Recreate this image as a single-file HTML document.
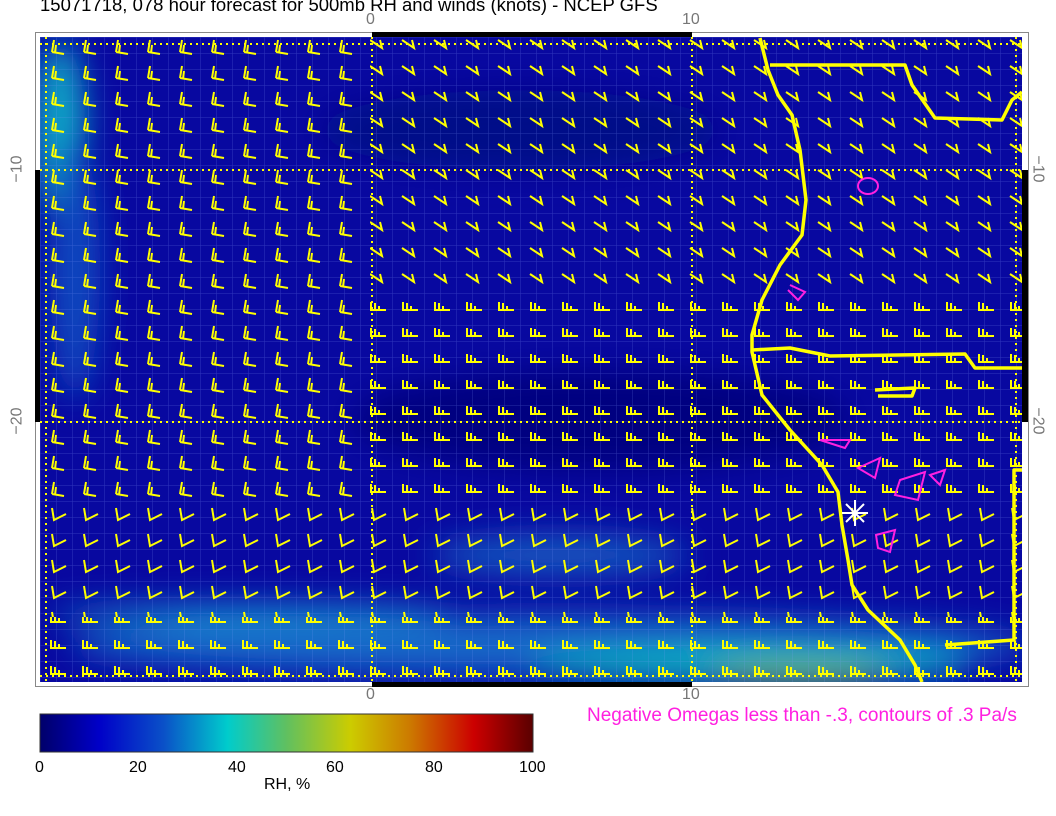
<!DOCTYPE html>
<html><head><meta charset="utf-8"><style>
html,body{margin:0;padding:0;background:#fff;}
body{width:1056px;height:816px;position:relative;overflow:hidden;font-family:"Liberation Sans",sans-serif;}
.t{position:absolute;white-space:nowrap;}
</style></head><body>
<div class="t" style="left:40px;top:-6px;font-size:18.5px;color:#000;">15071718, 078 hour forecast for 500mb RH and winds (knots) - NCEP GFS</div>
<div class="t" style="left:366px;top:11px;font-size:16px;color:#777;">0</div>
<div class="t" style="left:682px;top:11px;font-size:16px;color:#777;">10</div>
<div class="t" style="left:366px;top:686px;font-size:16px;color:#777;">0</div>
<div class="t" style="left:682px;top:686px;font-size:16px;color:#777;">10</div>
<div class="t" style="left:4px;top:160px;font-size:16px;color:#777;transform:rotate(-90deg);">−10</div>
<div class="t" style="left:4px;top:412px;font-size:16px;color:#777;transform:rotate(-90deg);">−20</div>
<div class="t" style="left:1024px;top:160px;font-size:16px;color:#777;transform:rotate(90deg);">−10</div>
<div class="t" style="left:1024px;top:412px;font-size:16px;color:#777;transform:rotate(90deg);">−20</div>
<svg width="1056" height="816" style="position:absolute;left:0;top:0" xmlns="http://www.w3.org/2000/svg">
<defs>
<filter id="bl" x="-50%" y="-50%" width="200%" height="200%"><feGaussianBlur stdDeviation="16"/></filter>
<pattern id="grid" width="16" height="16" patternUnits="userSpaceOnUse" x="40" y="37">
<path d="M0 0H16M0 0V16" stroke="#8aa0ff" stroke-opacity="0.3" stroke-width="1" fill="none"/></pattern>
<pattern id="hook" width="32" height="26" patternUnits="userSpaceOnUse" x="40" y="32">
<path d="M10 8 L22 16 L20 8" stroke="#ffff00" stroke-width="2" fill="none"/></pattern>
<pattern id="barbW" width="32" height="26" patternUnits="userSpaceOnUse" x="40" y="32">
<path d="M12 20 L24 22 M12 20 L14 8 M15 21 L16 13" stroke="#ffff00" stroke-width="2" fill="none"/></pattern>
<pattern id="barbL" width="32" height="26" patternUnits="userSpaceOnUse" x="40" y="32">
<path d="M10 18 H26 M11 18 V10 M15 18 V11 M19 18 V14" stroke="#ffff00" stroke-width="2" fill="none"/></pattern>
<pattern id="check" width="32" height="26" patternUnits="userSpaceOnUse" x="40" y="32">
<path d="M12 8 L14 20 L26 14" stroke="#ffff00" stroke-width="2" fill="none"/></pattern>
<linearGradient id="cb" x1="0" x2="1">
<stop offset="0" stop-color="#00006a"/><stop offset="0.12" stop-color="#0000c8"/>
<stop offset="0.25" stop-color="#0a50c8"/><stop offset="0.38" stop-color="#00cccc"/>
<stop offset="0.5" stop-color="#60c060"/><stop offset="0.63" stop-color="#cccc00"/>
<stop offset="0.75" stop-color="#cc7a00"/><stop offset="0.88" stop-color="#cc0000"/>
<stop offset="1" stop-color="#5a0000"/></linearGradient>
<clipPath id="mc"><rect x="40" y="37" width="982" height="645"/></clipPath>
</defs>
<rect x="35.5" y="32.5" width="993" height="654" fill="#fff" stroke="#888"/>
<rect x="372" y="32" width="320" height="5" fill="#000"/>
<rect x="372" y="682" width="320" height="5" fill="#000"/>
<rect x="35" y="170" width="5" height="252" fill="#000"/>
<rect x="1022" y="170" width="6" height="252" fill="#000"/>
<g clip-path="url(#mc)">
<rect x="40" y="37" width="982" height="645" fill="#0808a0"/>
<g filter="url(#bl)">
<ellipse cx="520" cy="130" rx="200" ry="40" fill="#050888"/>
<ellipse cx="600" cy="420" rx="250" ry="50" fill="#040680"/>
<ellipse cx="60" cy="130" rx="25" ry="90" fill="#10a8c8"/>
<ellipse cx="75" cy="270" rx="25" ry="130" fill="#1048c0"/>
<ellipse cx="550" cy="645" rx="480" ry="30" fill="#1868c8"/>
<ellipse cx="750" cy="665" rx="220" ry="18" fill="#10b0c0"/>
<ellipse cx="800" cy="675" rx="90" ry="10" fill="#70c050"/>
<ellipse cx="250" cy="615" rx="200" ry="10" fill="#1890d0"/>
<ellipse cx="560" cy="555" rx="130" ry="20" fill="#1558c0"/>
</g>
<rect x="40" y="37" width="982" height="645" fill="url(#grid)"/>
<rect x="40" y="37" width="330" height="470" fill="url(#barbW)"/>
<rect x="370" y="37" width="652" height="260" fill="url(#hook)"/>
<rect x="370" y="297" width="652" height="210" fill="url(#barbL)"/>
<rect x="40" y="507" width="982" height="110" fill="url(#check)"/>
<rect x="40" y="617" width="982" height="65" fill="url(#barbL)"/>
<g stroke="#ffff00" stroke-width="2" stroke-dasharray="2 4" fill="none">
<path d="M372 37V682M692 37V682M46 37V682M1016 37V682M40 170H1022M40 422H1022M40 44H1022M40 676H1022"/>
</g>
<g stroke="#ffff00" stroke-width="3.5" fill="none" stroke-linejoin="round">
<path d="M760 38 L768 70 L778 95 L792 115 L800 150 L806 200 L802 235 L780 265 L762 300 L752 335 L752 352 L762 395 L790 430 L822 465 L838 492 L842 525 L848 560 L852 585 L868 610 L900 640 L915 665 L922 682"/>
<path d="M770 65 L905 65 L912 85 L935 118 L1002 120 L1012 100 L1022 92"/>
<path d="M752 350 L790 348 L830 356 L965 354 L975 368 L1022 368"/>
<path d="M875 390 L915 388 L912 396 L878 396"/>
<path d="M1022 470 L1014 470 L1014 640 L945 645"/>
</g>
<g stroke="#ff20e0" stroke-width="2" fill="none">
<path d="M858 186 a10 8 0 1 0 20 0 a10 8 0 1 0 -20 0"/>
<path d="M790 285 L805 292 L798 300 L788 290"/>
<path d="M858 468 L880 458 L875 478 Z M900 480 L925 472 L918 500 L895 495 Z M876 535 L895 530 L890 552 L878 548 Z M930 475 L945 470 L940 485 Z"/>
<path d="M820 440 L850 440 L845 448 Z"/>
</g>
<g stroke="#fff" stroke-width="2"><path d="M842 513H868M855 500V526M846 504L864 522M864 504L846 522"/></g>
</g>
<rect x="40" y="714" width="493" height="38" fill="url(#cb)" stroke="#333" stroke-width="1"/>
</svg>
<div class="t" style="left:587px;top:705px;font-size:19px;color:#ff20e0;">Negative Omegas less than -.3, contours of .3 Pa/s</div>
<div class="t" style="left:35px;top:759px;font-size:16px;">0</div>
<div class="t" style="left:129px;top:759px;font-size:16px;">20</div>
<div class="t" style="left:228px;top:759px;font-size:16px;">40</div>
<div class="t" style="left:326px;top:759px;font-size:16px;">60</div>
<div class="t" style="left:425px;top:759px;font-size:16px;">80</div>
<div class="t" style="left:519px;top:759px;font-size:16px;">100</div>
<div class="t" style="left:264px;top:776px;font-size:16px;">RH, %</div>
</body></html>
